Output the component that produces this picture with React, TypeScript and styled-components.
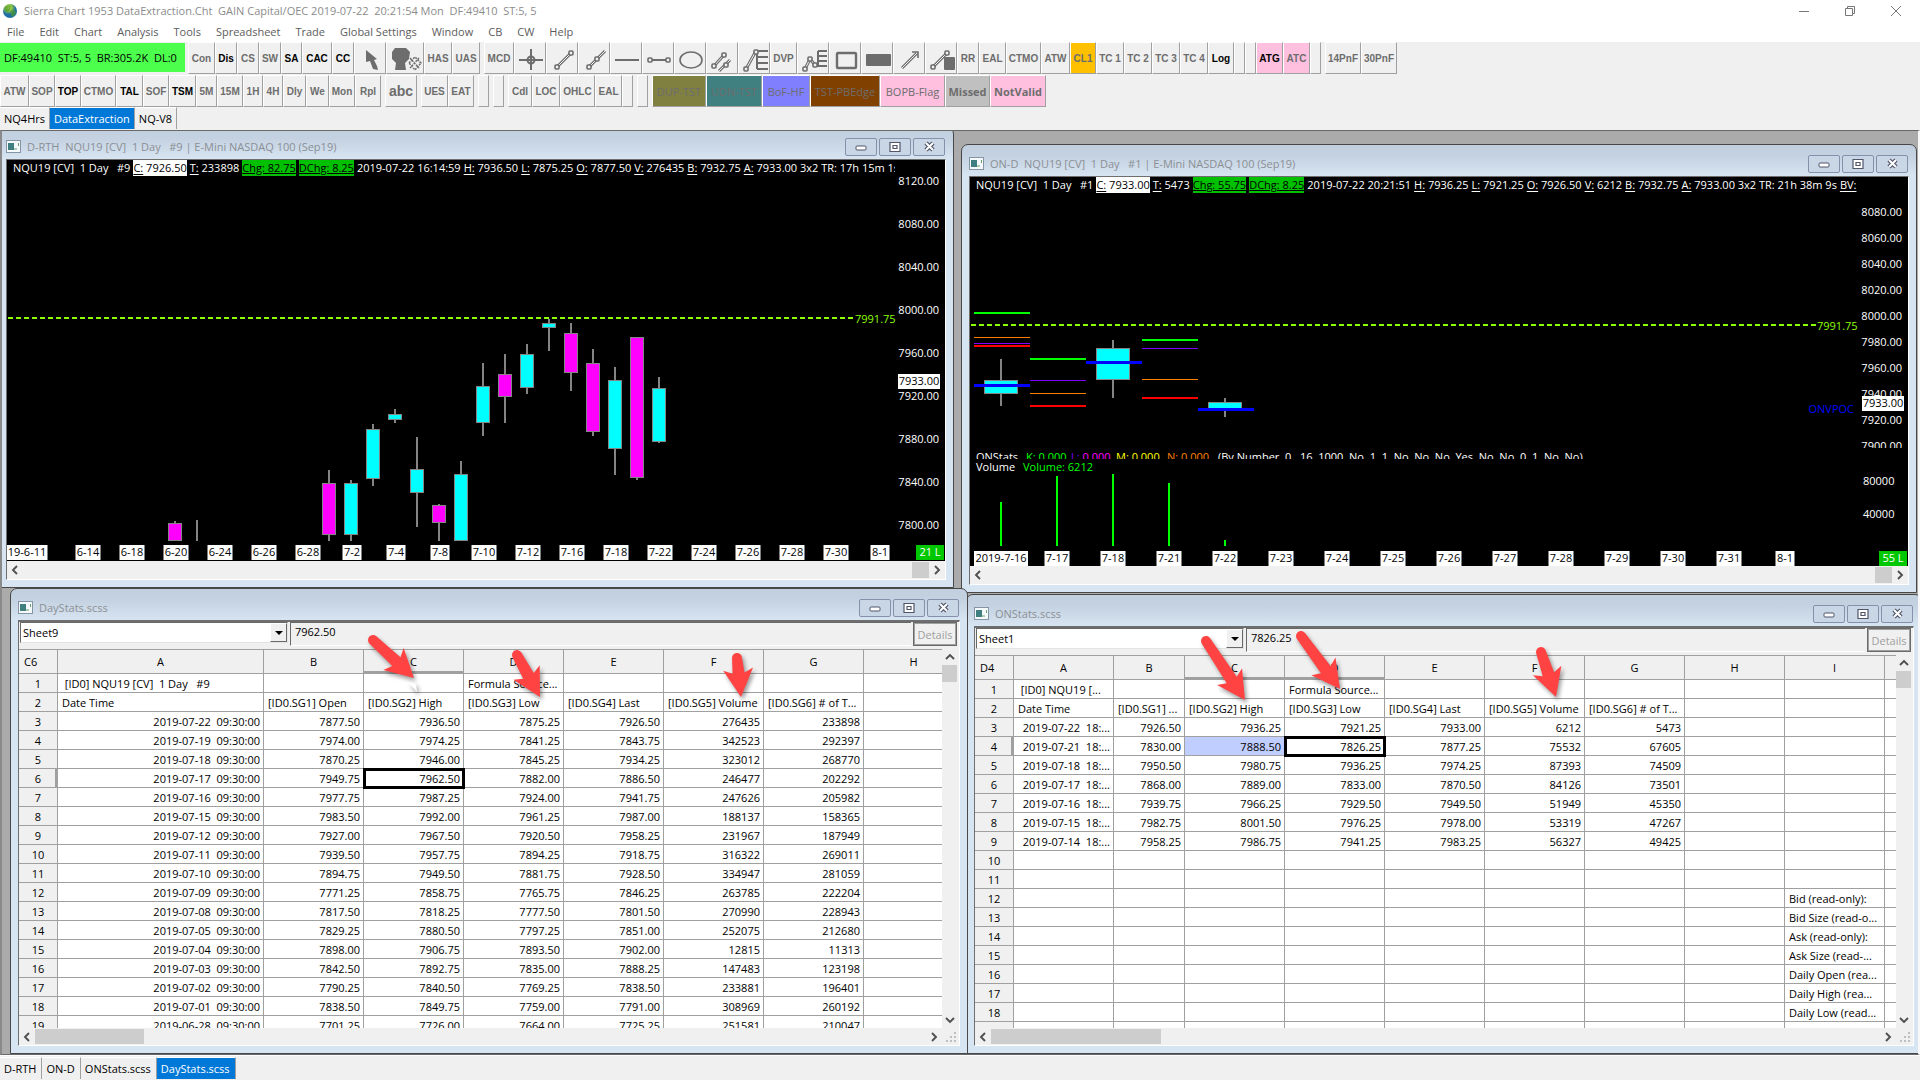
import React from "react";
import styled, { createGlobalStyle, css } from "styled-components";

const GlobalStyle = createGlobalStyle`
  *, *::before, *::after { box-sizing: border-box; }
  body { margin: 0; background: #f0f0f0; }
  body, button, input, select, table {
    font-family: "Open Sans", "Noto Sans", sans-serif;
    font-size: 11px;
  }
  button, input, select { margin: 0; padding: 0; border: 0; border-radius: 0; background: none; color: inherit; }
`;

/* ---------- application frame ---------- */

const Shell = styled.div`
  display: flex;
  flex-direction: column;
  height: 100vh;
  min-height: 720px;
  overflow: hidden;
  color: #000;
`;

const TitleBar = styled.header`
  display: flex;
  align-items: center;
  flex: none;
  height: 24px;
  padding: 0 12px 3px 2px;
  gap: 6px;
  background: #fff;
  color: #8c8c8c;
`;

const AppTitle = styled.h1`
  flex: 1;
  margin: 0;
  font-size: 11px;
  font-weight: 400;
  white-space: pre;
`;

const CaptionButtons = styled.div`
  display: flex;
  gap: 22px;
`;

const CaptionButton = styled.button`
  display: grid;
  place-items: center;
  width: 24px;
  height: 20px;
`;

const MenuBar = styled.nav`
  display: flex;
  flex: none;
  height: 18px;
  padding-bottom: 2px;
  background: #fff;
`;

const MenuItem = styled.button`
  padding: 0 8px 0 7px;
  color: #5c5c5c;
  line-height: 16px;
  white-space: nowrap;
`;

const ToolRow = styled.div<{ $h: number }>`
  display: flex;
  flex: none;
  height: ${(p) => p.$h}px;
  overflow: hidden;
`;

const ToolGroup = styled.div`
  display: flex;
  flex: none;
  margin-right: 4px;
`;

const Status = styled.output`
  flex: none;
  width: 185px;
  height: 29px;
  margin: 1px 3px 0 0;
  padding-left: 4px;
  background: #4dff4d;
  line-height: 29px;
  white-space: pre;
`;

const faces = {
  small: css`font: 700 10px "Liberation Sans", Arial, sans-serif;`,
  large: css`font: 700 14px "Liberation Sans", Arial, sans-serif;`,
  wide: css`font: 400 11px "Open Sans", sans-serif;`,
  wideBold: css`font: 700 11px "Open Sans", sans-serif;`,
};

const Tool = styled.button<{ $w: number; $bg?: string; $strong?: boolean; $face: keyof typeof faces }>`
  display: grid;
  place-items: center;
  flex: none;
  width: ${(p) => p.$w}px;
  height: 32px;
  overflow: hidden;
  border: 1px solid #a0a0a0;
  border-top-color: #fff;
  border-left-color: #fff;
  background: ${(p) => p.$bg ?? "#f0f0f0"};
  color: ${(p) => (p.$strong ? "#000" : "#6d6d6d")};
  white-space: nowrap;
  ${(p) => faces[p.$face]}
`;

const TabStrip = styled.nav<{ $bottom?: boolean }>`
  display: flex;
  flex: none;
  height: ${(p) => (p.$bottom ? 25 : 23)}px;
  padding-top: ${(p) => (p.$bottom ? 1 : 0)}px;
  border-top: ${(p) => (p.$bottom ? "1px solid #fff" : "0")};

  button { padding: 0 ${(p) => (p.$bottom ? 5 : 4)}px 0 4px; }
`;

const Tab = styled.button<{ $active?: boolean }>`
  height: 22px;
  border-right: 1px solid #a0a0a0;
  border-top: 1px solid #fff;
  background: ${(p) => (p.$active ? "#0078d7" : "#f0f0f0")};
  color: ${(p) => (p.$active ? "#fff" : "#000")};
  white-space: nowrap;
`;

const Workspace = styled.main`
  position: relative;
  flex: 1;
  min-height: 0;
  overflow: hidden;
  border: 1px solid #696969;
  border-left: 2px solid #8a8a8a;
  border-right: 2px solid #f8f8f8;
  background: #ababab;
`;

/* ---------- child windows on the workspace ---------- */

type Place = { left: number; top: number; width?: number; right?: number; height?: number; bottom?: number };
const px = (name: string, v?: number) => (v === undefined ? "" : `${name}: ${v}px;`);

const Frame = styled.section<{ $at: Place }>`
  position: absolute;
  display: flex;
  flex-direction: column;
  ${({ $at }) => px("left", $at.left) + px("top", $at.top) + px("width", $at.width) + px("right", $at.right) + px("height", $at.height) + px("bottom", $at.bottom)}
  padding: 0 7px 7px;
  border: 1px solid #484848;
  border-radius: 7px 7px 0 0;
  background: linear-gradient(#c1cfdf 0, #c3d1e0 10px, #d7e4f2 31px);
`;

const FrameBar = styled.header`
  display: flex;
  align-items: center;
  flex: none;
  height: 31px;
  padding: 6px 1px 0 0;
  gap: 6px;
`;

const FrameTitle = styled.h2`
  flex: 1;
  margin: 0;
  color: #8b8f94;
  font-size: 11px;
  font-weight: 400;
  white-space: pre;
`;

const FrameButtons = styled.div`
  display: flex;
  gap: 2px;
`;

const FrameButton = styled.button`
  display: grid;
  place-items: center;
  width: 32px;
  height: 18px;
  border: 1px solid #8391ad;
  border-radius: 2px;
  background: #c8d6e6;
`;

const Client = styled.div<{ $sheet?: boolean }>`
  display: flex;
  flex-direction: column;
  flex: 1;
  min-height: 0;
  overflow: hidden;
  border: 1px solid #fff;
  border-top: ${(p) => (p.$sheet ? 2 : 1)}px solid #6e6e6e;
  border-left-color: #6e6e6e;
  background: #f0f0f0;
`;

const ChartArea = styled.div`
  display: flex;
  flex-direction: column;
  flex: 1;
  min-height: 0;
  background: #000;
  color: #fff;
`;

const Readout = styled.div`
  display: flex;
  flex: none;
  gap: 3px;
  height: 16px;
  margin-right: 50px;
  padding-left: 6px;
  overflow: hidden;
  line-height: 15px;
  white-space: pre;
`;

const tones = {
  plain: css`color: #fff;`,
  last: css`background: #fff; color: #000;`,
  change: css`background: #00c000; color: #000; text-decoration: underline;`,
};

const ReadoutItem = styled.span<{ $tone: keyof typeof tones }>`
  flex: none;
  ${(p) => tones[p.$tone]}
  u { text-underline-offset: 2px; }
`;

const Plot = styled.svg`
  display: block;
  flex: 1;
  width: 100%;
  min-height: 0;
  font-family: "Open Sans", "Noto Sans", sans-serif;
  font-size: 11px;
`;

/* ---------- scroll bars ---------- */

const HBar = styled.div<{ $sheet?: boolean }>`
  display: flex;
  align-items: center;
  flex: none;
  height: ${(p) => (p.$sheet ? 17 : 18)}px;
  background: #f0f0f0;
`;

const VBar = styled.div`
  display: flex;
  flex-direction: column;
  flex: none;
  width: 17px;
  background: #f0f0f0;
`;

const ScrollButton = styled.button`
  display: grid;
  place-items: center;
  flex: none;
  width: 16px;
  height: 16px;
`;

const Thumb = styled.div<{ $w: number; $h: number; $end?: boolean }>`
  flex: none;
  width: ${(p) => p.$w}px;
  height: ${(p) => p.$h}px;
  margin-left: ${(p) => (p.$end ? "auto" : "0")};
  background: #cdcdcd;
`;

const Filler = styled.div`
  flex: 1;
`;

/* ---------- spreadsheet ---------- */

const FormulaBar = styled.div`
  display: flex;
  flex: none;
  gap: 2px;
  height: 27px;
  padding: 0 2px 3px 1px;
`;

const Picker = styled.div`
  position: relative;
  flex: none;
  width: 268px;
  height: 21px;
`;

const SheetSelect = styled.select`
  appearance: none;
  width: 100%;
  height: 100%;
  padding-left: 2px;
  border: 1px solid #e3e3e3;
  border-top-color: #696969;
  border-left-color: #696969;
  background: #fff;
  color: #000;
`;

const PickerArrow = styled.span`
  position: absolute;
  top: 1px;
  right: 1px;
  display: grid;
  place-items: center;
  width: 17px;
  height: 19px;
  border: 1px solid #696969;
  border-top-color: #fff;
  border-left-color: #fff;
  background: #f0f0f0;
  pointer-events: none;
`;

const FormulaInput = styled.input`
  flex: 1;
  min-width: 0;
  padding: 0 4px 5px;
  border-top: 1px solid #696969;
  border-left: 1px solid #696969;
  border-bottom: 1px solid #fff;
`;

const Details = styled.button`
  flex: none;
  width: 44px;
  border: 1px solid #696969;
  outline: 1px solid #a0a0a0;
  outline-offset: -2px;
  color: #a0a0a0;
`;

const GridRow = styled.div`
  display: flex;
  flex: 1;
  min-height: 0;
`;

const GridClip = styled.div`
  flex: 1;
  min-width: 0;
  overflow: hidden;
  border-top: 1px solid #a0a0a0;
  background: #fff;
`;

const Grid = styled.table`
  width: 0;
  table-layout: fixed;
  border-spacing: 0;
  border-collapse: separate;
  line-height: 17px;
  white-space: pre;
`;

const line = css`
  border-right: 1px solid #a0a0a0;
  border-bottom: 1px solid #a0a0a0;
`;

const ColHead = styled.th<{ $on?: boolean }>`
  ${line}
  height: 24px;
  padding: 0;
  background: #f0f0f0;
  font-weight: 400;
  ${(p) => p.$on && "border-bottom-width: 3px; padding-top: 2px;"}
`;

const Corner = styled(ColHead)`
  padding-left: 5px;
  text-align: left;
`;

const RowHead = styled.th<{ $on?: boolean }>`
  ${line}
  height: 19px;
  padding: 1px 0 0;
  background: #f0f0f0;
  font-weight: 400;
  ${(p) => p.$on && "border-right-width: 3px; padding-left: 2px;"}
`;

const Cell = styled.td<{ $left?: boolean; $state?: "cursor" | "range" }>`
  ${line}
  height: 19px;
  padding: 1px 3px 0 4px;
  overflow: hidden;
  text-align: ${(p) => (p.$left ? "left" : "right")};
  ${(p) => p.$state === "cursor" && "outline: 3px solid #000; outline-offset: -2px;"}
  ${(p) => p.$state === "range" && "background: #c0ceff;"}
`;

const Overlay = styled.svg`
  position: absolute;
  inset: 0;
  width: 100%;
  height: 100%;
  pointer-events: none;
  filter: drop-shadow(2px 3px 2px rgba(0, 0, 0, 0.4));
`;

/* ---------- toolbar icons ---------- */

const ink = "#6d6d6d";
const Node = ({ x, y }: { x: number; y: number }) => (
  <rect x={x - 2} y={y - 2} width="4" height="4" rx="1" fill="#f0f0f0" stroke={ink} strokeWidth="1.6" />
);
const Twin = ({ p }: { p: number[] }) => (
  <>
    <line x1={p[0]} y1={p[1]} x2={p[2]} y2={p[3]} stroke={ink} strokeWidth="3" />
    <line x1={p[0]} y1={p[1]} x2={p[2]} y2={p[3]} stroke="#f0f0f0" strokeWidth="1" />
  </>
);

const glyphs: Record<string, React.ReactNode> = {
  Pointer: <path d="M11 7v12l4-1 3 8 5 1-1-4-3-6 3-1z" fill={ink} />,
  Hand: (
    <>
      <path d="M8 5h11l4 4-1 7-4 4 1 7H8l1-7-4-4V9z" fill={ink} />
      <path d="M22 20l6-6 6 6-6 7-6-7zM23 15l9 10M32 15l-9 10" fill="none" stroke={ink} strokeWidth="1.5" strokeDasharray="2 1" />
    </>
  ),
  Crosshair: (
    <>
      <path d="M4 17h24M16 6v21" stroke={ink} strokeWidth="2" />
      <circle cx="16" cy="17" r="3.5" fill="none" stroke={ink} strokeWidth="2" />
    </>
  ),
  Line: (<><Twin p={[10, 24, 24, 10]} /><Node x={10} y={24} /><Node x={24} y={10} /></>),
  Ray: (<><Twin p={[10, 24, 26, 8]} /><Node x={10} y={24} /><Node x={18} y={16} /></>),
  Horizontal: <path d="M4 17h24" stroke={ink} strokeWidth="2" />,
  Segment: (<><path d="M7 17h19" stroke={ink} strokeWidth="2" /><Node x={7} y={17} /><Node x={25} y={17} /></>),
  Ellipse: <ellipse cx="16" cy="17" rx="11" ry="8" fill="none" stroke={ink} strokeWidth="1.6" />,
  Parallel: (
    <><Twin p={[7, 23, 17, 12]} /><Twin p={[12, 28, 23, 17]} /><Node x={7} y={23} /><Node x={17} y={12} /><Node x={19} y={22} /></>
  ),
  Retracement: (
    <><Twin p={[7, 26, 17, 8]} /><path d="M18 8v18M18 8h11M18 14h11M18 20h11M18 26h11" stroke={ink} strokeWidth="2" /><Node x={7} y={26} /><Node x={17} y={9} /></>
  ),
  Projection: (
    <><Twin p={[7, 26, 12, 16]} /><Twin p={[12, 16, 17, 22]} /><path d="M20 8v14M20 8h9M20 13h9M20 18h9M17 23h12" stroke={ink} strokeWidth="2" /><Node x={7} y={26} /><Node x={12} y={16} /><Node x={17} y={22} /></>
  ),
  Rectangle: <rect x="7" y="10" width="19" height="15" rx="1" fill="none" stroke={ink} strokeWidth="2.4" />,
  Block: <rect x="4" y="11" width="25" height="12" rx="1" fill={ink} />,
  Arrow: (<><Twin p={[8, 25, 23, 10]} /><path d="M18 9h6v6" fill="none" stroke={ink} strokeWidth="1.6" /></>),
  Extension: (<><Twin p={[7, 24, 21, 10]} /><rect x="18" y="14" width="11" height="13" rx="1" fill={ink} /><Node x={7} y={24} /><Node x={21} y={10} /></>),
};

/* ---------- toolbar contents ---------- */

type ToolDef = { t?: string; i?: string; w: number; on?: boolean; bg?: string; face?: keyof typeof faces };
const icon = (i: string, w = 32): ToolDef => ({ i, w });
const tool = (t: string, w: number, extra: Partial<ToolDef> = {}): ToolDef => ({ t, w, ...extra });
const on = { on: true };

const rowOne: ToolDef[][] = [
  [
    tool("Con", 27), tool("Dis", 22, on), tool("CS", 22), tool("SW", 22), tool("SA", 21, on), tool("CAC", 30, on), tool("CC", 22, on),
    icon("Pointer"), icon("Hand", 38), tool("HAS", 28), tool("UAS", 28),
  ],
  [
    tool("MCD", 30), icon("Crosshair"), icon("Line"), icon("Ray"), icon("Horizontal"), icon("Segment"), icon("Ellipse"),
    icon("Parallel"), icon("Retracement"), tool("DVP", 27), icon("Projection"), icon("Rectangle"), icon("Block"), icon("Arrow"),
    icon("Extension"), tool("RR", 22), tool("EAL", 27), tool("CTMO", 35), tool("ATW", 29), tool("CL1", 26, { bg: "#ffc000" }),
    tool("TC 1", 28), tool("TC 2", 28), tool("TC 3", 28), tool("TC 4", 28), tool("Log", 26, on), tool("", 11), tool("", 11),
    tool("ATG", 27, { on: true, bg: "#ffc0e0" }), tool("ATC", 27, { bg: "#ffc0e0" }), tool("", 11),
  ],
  [tool("14PnF", 36), tool("30PnF", 36)],
];

const rowTwo: ToolDef[][] = [
  [
    tool("ATW", 29), tool("SOP", 26), tool("TOP", 26, on), tool("CTMO", 35), tool("TAL", 27, on), tool("SOF", 26), tool("TSM", 27, on),
    tool("5M", 21), tool("15M", 26), tool("1H", 20), tool("4H", 20), tool("Dly", 23), tool("We", 23), tool("Mon", 26), tool("Rpl", 26),
  ],
  [tool("abc", 32, { face: "large" })],
  [tool("UES", 27), tool("EAT", 26)],
  [tool("", 11)],
  [tool("", 11)],
  [tool("Cdl", 24), tool("LOC", 28), tool("OHLC", 35), tool("EAL", 27), tool("", 11)],
  [tool("", 11)],
  [
    tool("DUP-TST", 54, { bg: "#808040", face: "wide" }), tool("UDN-TST", 56, { bg: "#408080", face: "wide" }),
    tool("BoF-HF", 48, { bg: "#8080ff", face: "wide" }), tool("TST-PBEdge", 70, { bg: "#804000", face: "wide" }),
    tool("BOPB-Flag", 65, { bg: "#ffc0e0", face: "wide" }), tool("Missed", 45, { bg: "#c0c0c0", face: "wideBold" }),
    tool("NotValid", 56, { bg: "#ffc0e0", face: "wideBold" }),
  ],
];

const Toolbar = ({ groups, height, children }: { groups: ToolDef[][]; height: number; children?: React.ReactNode }) => (
  <ToolRow $h={height}>
    {children}
    {groups.map((g, gi) => (
      <ToolGroup key={gi}>
        {g.map((b, i) => (
          <Tool key={i} $w={b.w} $bg={b.bg} $strong={b.on} $face={b.face ?? "small"} aria-label={b.t || b.i || "Blank"}>
            {b.i ? <svg width={b.w - 2} height="30">{glyphs[b.i]}</svg> : b.t}
          </Tool>
        ))}
      </ToolGroup>
    ))}
  </ToolRow>
);

/* ---------- shared window pieces ---------- */

const DocIcon = () => (
  <svg width="15" height="13">
    <rect x="0.5" y="0.5" width="14" height="12" fill="#f6f9fb" stroke="#8496a6" />
    <rect x="2" y="3" width="6" height="7" fill="#3f7f80" />
    <path d="M8 9h3M12.5 3v3" stroke="#6aa06a" strokeWidth="1" />
  </svg>
);

const Window = ({ title, at, sheet, children }: { title: string; at: Place; sheet?: boolean; children: React.ReactNode }) => (
  <Frame $at={at}>
    <FrameBar>
      <DocIcon />
      <FrameTitle>{title}</FrameTitle>
      <FrameButtons>
        <FrameButton aria-label="Minimize">
          <svg width="12" height="8"><rect x="1" y="3" width="10" height="4" rx="1" fill="#fff" stroke="#51566b" /></svg>
        </FrameButton>
        <FrameButton aria-label="Restore">
          <svg width="12" height="10"><path d="M1 .5h10v9H1z" fill="#fff" stroke="#51566b" strokeWidth="1.2" /><path d="M4 3.5h4v3H4z" fill="#fff" stroke="#51566b" strokeWidth="1.2" /></svg>
        </FrameButton>
        <FrameButton aria-label="Close">
          <svg width="13" height="11"><path d="M3 2l7 7M10 2l-7 7" stroke="#51566b" strokeWidth="4.4" /><path d="M3 2l7 7M10 2l-7 7" stroke="#fff" strokeWidth="2" /></svg>
        </FrameButton>
      </FrameButtons>
    </FrameBar>
    <Client $sheet={sheet}>{children}</Client>
  </Frame>
);

const chevrons = { left: "M7 1L3 5l4 4", right: "M3 1l4 4-4 4", up: "M1 7l4-4 4 4", down: "M1 3l4 4 4-4" };
const Chevron = ({ dir }: { dir: keyof typeof chevrons }) => (
  <ScrollButton aria-label={`Scroll ${dir}`}>
    <svg width="10" height="10"><path d={chevrons[dir]} fill="none" stroke="#505050" strokeWidth="1.9" /></svg>
  </ScrollButton>
);

/* ---------- charts ---------- */

type Piece = [keyof typeof tones, string, string];
const ReadoutLine = ({ pieces }: { pieces: Piece[] }) => (
  <Readout>
    {pieces.map(([tone, label, value], i) => (
      <ReadoutItem key={i} $tone={tone}>{label && <u>{label}</u>}{value}</ReadoutItem>
    ))}
  </Readout>
);

const UP = "#00ffff";
const DOWN = "#ff00ff";
type CandleDef = [number, number, number, number, number, string];

const Candle = ({ c: [x, hi, lo, top, bottom, fill], w }: { c: CandleDef; w: number }) => (
  <g shapeRendering="crispEdges">
    <line x1={x} x2={x} y1={hi} y2={lo} stroke="#848484" strokeWidth="2" />
    {bottom > top && <rect x={x - w / 2} y={top + 0.5} width={w} height={bottom - top - 1} fill={fill} stroke="#848484" />}
  </g>
);

const Label = ({ x, y, w, t, bg = "#fff", fg = "#000" }: { x: number; y: number; w: number; t: string; bg?: string; fg?: string }) => (
  <g>
    <rect x={x - w / 2} y={y - 7} width={w} height="15" fill={bg} />
    <text x={x} y={y + 4} textAnchor="middle" fill={fg}>{t}</text>
  </g>
);

const dayCandles: CandleDef[] = [
  [175, 521, 541, 523, 541, DOWN], [197, 520, 541, 0, 0, UP], [329, 470, 541, 483, 535, DOWN], [351, 480, 541, 483, 535, UP],
  [373, 424, 486, 429, 479, UP], [395, 409, 423, 414, 420, UP], [417, 437, 527, 469, 493, UP], [439, 504, 541, 505, 523, DOWN],
  [461, 461, 541, 474, 541, UP], [483, 363, 436, 386, 423, UP], [505, 354, 423, 374, 397, DOWN], [527, 344, 394, 354, 388, UP],
  [549, 319, 351, 323, 328, UP], [571, 323, 391, 333, 373, DOWN], [593, 349, 436, 363, 432, DOWN], [615, 367, 475, 380, 449, UP],
  [637, 337, 480, 337, 478, DOWN], [659, 377, 443, 388, 442, UP],
];
const dayDates = ["6-14", "6-18", "6-20", "6-24", "6-26", "6-28", "7-2", "7-4", "7-8", "7-10", "7-12", "7-16", "7-18", "7-22", "7-24", "7-26", "7-28", "7-30", "8-1"];

const DayChart = () => (
  <ChartArea>
    <ReadoutLine
      pieces={[
        ["plain", "", "NQU19 [CV]  1 Day   #9"], ["last", "C:", " 7926.50"], ["plain", "T:", " 233898"], ["change", "", "Chg: 82.75"],
        ["change", "", "DChg: 8.25"], ["plain", "", "2019-07-22 16:14:59"], ["plain", "H:", " 7936.50"], ["plain", "L:", " 7875.25"],
        ["plain", "O:", " 7877.50"], ["plain", "V:", " 276435"], ["plain", "B:", " 7932.75"], ["plain", "A:", " 7933.00 3x2 TR: 17h 15m 1s"],
      ]}
    />
    <Plot role="img" aria-label="D-RTH daily candles">
      <g transform="translate(-7 -176)">
        <line x1="8" x2="854" y1="318" y2="318" stroke="#8cff00" strokeWidth="2" strokeDasharray="5 3" />
        <text x="855" y="323" fill="#8cff00">7991.75</text>
        {dayCandles.map((c) => <Candle key={c[0]} c={c} w={13} />)}
        {[8120, 8080, 8040, 8000, 7960, 7920, 7880, 7840, 7800].map((p, i) => (
          <text key={p} x="939" y={185 + i * 43} textAnchor="end" fill="#fff">{p}.00</text>
        ))}
        <Label x={919} y={381} w={42} t="7933.00" />
        <Label x={27} y={552} w={41} t="19-6-11" />
        {dayDates.map((d, i) => <Label key={d} x={88 + i * 44} y={552} w={d.length * 6 + 1} t={d} />)}
        <Label x={930} y={552} w={28} t="21 L" bg="#00c800" fg="#fff" />
      </g>
    </Plot>
  </ChartArea>
);

type Level = [number, number, string, number];
const levels: Level[] = [
  [974, 313, "#00ff00", 2], [974, 337, "#ff8000", 1], [974, 343, "#8000ff", 1], [974, 346, "#ff0000", 2],
  [1030, 359, "#00ff00", 2], [1030, 380, "#8000ff", 1], [1030, 393, "#ff8000", 1], [1030, 406, "#ff0000", 2],
  [1142, 340, "#00ff00", 2], [1142, 348, "#8000ff", 1], [1142, 379, "#ff8000", 1], [1142, 398, "#ff0000", 2],
];
const poc: Level[] = [[974, 385, "#0000ff", 3], [1086, 362, "#0000ff", 3], [1198, 409, "#0000ff", 3]];
const nightCandles: CandleDef[] = [[1001, 359, 406, 380, 394, UP], [1113, 340, 398, 348, 380, UP], [1225, 398, 417, 402, 409, UP]];
const volumes = [[1001, 502], [1057, 476], [1113, 474], [1169, 483], [1225, 540]];
const nightDates = ["7-17", "7-18", "7-21", "7-22", "7-23", "7-24", "7-25", "7-26", "7-27", "7-28", "7-29", "7-30", "7-31", "8-1"];
const LevelLine = ({ l: [x, y, c, w] }: { l: Level }) => <rect x={x} y={y - (w >> 1)} width="56" height={w} fill={c} />;

const NightChart = () => (
  <ChartArea>
    <ReadoutLine
      pieces={[
        ["plain", "", "NQU19 [CV]  1 Day   #1"], ["last", "C:", " 7933.00"], ["plain", "T:", " 5473"], ["change", "", "Chg: 55.75"],
        ["change", "", "DChg: 8.25"], ["plain", "", "2019-07-22 20:21:51"], ["plain", "H:", " 7936.25"], ["plain", "L:", " 7921.25"],
        ["plain", "O:", " 7926.50"], ["plain", "V:", " 6212"], ["plain", "B:", " 7932.75"], ["plain", "A:", " 7933.00 3x2 TR: 21h 38m 9s"], ["plain", "BV:", ""],
      ]}
    />
    <Plot role="img" aria-label="ON-D overnight candles and volume">
      <defs>
        <clipPath id="upper"><rect x="970" y="193" width="940" height="255" /></clipPath>
        <clipPath id="study"><rect x="970" y="448" width="940" height="11" /></clipPath>
      </defs>
      <g transform="translate(-970 -193)">
        <line x1="971" x2="1816" y1="325" y2="325" stroke="#8cff00" strokeWidth="2" strokeDasharray="5 3" />
        <text x="1817" y="330" fill="#8cff00">7991.75</text>
        {levels.map((l, i) => <LevelLine key={i} l={l} />)}
        {nightCandles.map((c) => <Candle key={c[0]} c={c} w={33} />)}
        {poc.map((l, i) => <LevelLine key={i} l={l} />)}
        <g clipPath="url(#upper)">
          {[8080, 8060, 8040, 8020, 8000, 7980, 7960, 7940, 7920, 7900].map((p, i) => (
            <text key={p} x="1902" y={216 + i * 26} textAnchor="end" fill="#fff">{p}.00</text>
          ))}
        </g>
        <Label x={1883} y={403} w={42} t="7933.00" />
        <text x="1854" y="413" textAnchor="end" fill="#0000ff">ONVPOC</text>
        <g clipPath="url(#study)">
          <text x="976" y="461" fill="#fff">ONStats</text>
          <text x="1026" y="461" fill="#00ff00">K: 0.000</text>
          <text x="1071" y="461" fill="#ff00ff"><tspan fill="#8000ff">L:</tspan> 0.000</text>
          <text x="1116" y="461" fill="#ffff00">M: 0.000</text>
          <text x="1167" y="461" fill="#ff8000">N: 0.000</text>
          <text x="1218" y="461" fill="#fff">(By Number, 0, .16, 1000, No, 1, 1, No, No, No, Yes, No, No, 0, 1, No, No)</text>
        </g>
        <text x="976" y="471" fill="#fff">Volume</text>
        <text x="1023" y="471" fill="#00ff00">Volume: 6212</text>
        <text x="1863" y="485" fill="#fff">80000</text>
        <text x="1863" y="518" fill="#fff">40000</text>
        {volumes.map(([x, y]) => <rect key={x} x={x - 1} y={y} width="2" height={546 - y} fill="#00ff00" />)}
        <Label x={1001} y={558} w={54} t="2019-7-16" />
        {nightDates.map((d, i) => <Label key={d} x={1057 + i * 56} y={558} w={d.length * 6 + 1} t={d} />)}
        <Label x={1893} y={558} w={28} t="55 L" bg="#00c800" fg="#fff" />
      </g>
    </Plot>
  </ChartArea>
);

const ChartScroll = () => (
  <HBar>
    <Chevron dir="left" />
    <Thumb $w={17} $h={16} $end />
    <Chevron dir="right" />
  </HBar>
);

/* ---------- sheets ---------- */

type SheetData = {
  name: string; value: string; corner: string; cols: string[]; widths: number[]; onCols: string[]; onRow: number;
  cursor: string; range?: string; rows: string[][]; thumb: number;
};

const dayHeads = ["Date Time", "[ID0.SG1] Open", "[ID0.SG2] High", "[ID0.SG3] Low", "[ID0.SG4] Last", "[ID0.SG5] Volume", "[ID0.SG6] # of T..."];
const dayRows = `07-22 7877.50 7936.50 7875.25 7926.50 276435 233898
07-19 7974.00 7974.25 7841.25 7843.75 342523 292397
07-18 7870.25 7946.00 7845.25 7934.25 323012 268770
07-17 7949.75 7962.50 7882.00 7886.50 246477 202292
07-16 7977.75 7987.25 7924.00 7941.75 247626 205982
07-15 7983.50 7992.00 7961.25 7987.00 188137 158365
07-12 7927.00 7967.50 7920.50 7958.25 231967 187949
07-11 7939.50 7957.75 7894.25 7918.75 316322 269011
07-10 7894.75 7949.50 7881.75 7928.50 334947 281059
07-09 7771.25 7858.75 7765.75 7846.25 263785 222204
07-08 7817.50 7818.25 7777.50 7801.50 270990 228943
07-05 7829.25 7880.50 7797.25 7851.00 252075 212680
07-04 7898.00 7906.75 7893.50 7902.00 12815 11313
07-03 7842.50 7892.75 7835.00 7888.25 147483 123198
07-02 7790.25 7840.50 7769.25 7838.50 233881 196401
07-01 7838.50 7849.75 7759.00 7791.00 308969 260192
06-28 7701.25 7726.00 7664.00 7725.25 251581 210047`
  .split("\n")
  .map((r) => r.split(" "))
  .map(([d, ...v]) => [`2019-${d}  09:30:00`, ...v]);

const nightRows = `07-22 7926.50 7936.25 7921.25 7933.00 6212 5473
07-21 7830.00 7888.50 7826.25 7877.25 75532 67605
07-18 7950.50 7980.75 7936.25 7974.25 87393 74509
07-17 7868.00 7889.00 7833.00 7870.50 84126 73501
07-16 7939.75 7966.25 7929.50 7949.50 51949 45350
07-15 7982.75 8001.50 7976.25 7978.00 53319 47267
07-14 7958.25 7986.75 7941.25 7983.25 56327 49425`
  .split("\n")
  .map((r) => r.split(" "))
  .map(([d, ...v]) => [`2019-${d}  18:...`, ...v]);

const quoteLabels = ["Bid (read-only):", "Bid Size (read-o...", "Ask (read-only):", "Ask Size (read-...", "Daily Open (rea...", "Daily High (rea...", "Daily Low (read...", "Daily Price Cha..."];

const daySheet: SheetData = {
  name: "Sheet9", value: "7962.50", corner: "C6", cols: [..."ABCDEFGH"], widths: [39, 206, 100, 100, 100, 100, 100, 100, 100],
  onCols: ["C"], onRow: 6, cursor: "C6", thumb: 109,
  rows: [[" [ID0] NQU19 [CV]  1 Day   #9", "", "", "Formula Source..."], dayHeads, ...dayRows],
};

const nightSheet: SheetData = {
  name: "Sheet1", value: "7826.25", corner: "D4", cols: [..."ABCDEFGHIJ"], widths: [39, 100, 71, 100, 100, 100, 100, 100, 100, 100, 100],
  onCols: ["C", "D"], onRow: 4, cursor: "D4", range: "C4", thumb: 170,
  rows: [
    [" [ID0] NQU19 [...", "", "", "Formula Source..."],
    ["Date Time", "[ID0.SG1] ...", ...dayHeads.slice(2)],
    ...nightRows, [], [],
    ...quoteLabels.map((q) => ["", "", "", "", "", "", "", "", q]),
  ],
};

const Sheet = ({ data }: { data: SheetData }) => (
  <>
    <FormulaBar>
      <Picker>
        <SheetSelect aria-label="Sheet" defaultValue={data.name}><option>{data.name}</option></SheetSelect>
        <PickerArrow><svg width="8" height="4"><path d="M0 0h8L4 4z" fill="#000" /></svg></PickerArrow>
      </Picker>
      <FormulaInput aria-label="Cell value" readOnly value={data.value} />
      <Details disabled>Details</Details>
    </FormulaBar>
    <GridRow>
      <GridClip>
        <Grid>
          <colgroup>{data.widths.map((w, i) => <col key={i} style={{ width: w }} />)}</colgroup>
          <thead>
            <tr>
              <Corner>{data.corner}</Corner>
              {data.cols.map((c) => <ColHead key={c} $on={data.onCols.includes(c)}>{c}</ColHead>)}
            </tr>
          </thead>
          <tbody>
            {data.rows.map((row, r) => (
              <tr key={r}>
                <RowHead scope="row" $on={r + 1 === data.onRow}>{r + 1}</RowHead>
                {data.cols.map((c, i) => {
                  const id = `${c}${r + 1}`;
                  return (
                    <Cell key={c} $left={r < 2 || i > 6} $state={id === data.cursor ? "cursor" : id === data.range ? "range" : undefined}>
                      {row[i] ?? ""}
                    </Cell>
                  );
                })}
              </tr>
            ))}
          </tbody>
        </Grid>
      </GridClip>
      <VBar>
        <Chevron dir="up" />
        <Thumb $w={15} $h={17} />
        <Filler />
        <Chevron dir="down" />
      </VBar>
    </GridRow>
    <HBar $sheet>
      <Chevron dir="left" />
      <Thumb $w={data.thumb} $h={15} />
      <Filler />
      <Chevron dir="right" />
      <svg width="17" height="15">
        <path d="M4 11h2v2H4zM8 11h2v2H8zM12 11h2v2h-2zM8 7h2v2H8zM12 7h2v2h-2zM12 3h2v2h-2z" fill="#bfbfbf" />
      </svg>
    </HBar>
  </>
);

/* ---------- red marker arrows ---------- */

const Marker = ({ a: [x1, y1, x2, y2] }: { a: number[] }) => {
  const len = Math.hypot(x2 - x1, y2 - y1);
  const angle = (Math.atan2(y2 - y1, x2 - x1) * 180) / Math.PI;
  const neck = len - 27;
  return (
    <g transform={`translate(${x1} ${y1}) rotate(${angle})`} fill="#ff4343">
      <path d={`M0 -5A5 5 0 0 0 0 5L${neck + 3} 6L${neck - 1} 15L${len} 0L${neck - 1} -15L${neck + 3} -6Z`} />
    </g>
  );
};
const markers = [
  [373, 640, 414, 678], [517, 655, 540, 697], [737, 658, 741, 697], [1206, 641, 1245, 700], [1301, 636, 1340, 689], [1541, 652, 1556, 697],
];

const menus = ["File", "Edit", "Chart", "Analysis", "Tools", "Spreadsheet", "Trade", "Global Settings", "Window", "CB", "CW", "Help"];

export default function App() {
  return (
    <Shell>
      <GlobalStyle />
      <TitleBar>
        <svg width="16" height="18">
          <defs>
            <radialGradient id="globe" cx="40%" cy="25%"><stop offset="0" stopColor="#fff9a0" /><stop offset="0.45" stopColor="#8cc63c" /><stop offset="1" stopColor="#1d6fa5" /></radialGradient>
          </defs>
          <circle cx="8" cy="9" r="7" fill="url(#globe)" />
          <path d="M3 5l3-2 3 1-1 4-3 2-2-2zM9 9l4-1 1 3-3 4-2-2z" fill="#4f9a2a" opacity=".7" />
        </svg>
        <AppTitle>{"Sierra Chart 1953 DataExtraction.Cht  GAIN Capital/OEC 2019-07-22  20:21:54 Mon  DF:49410  ST:5, 5"}</AppTitle>
        <CaptionButtons>
          <CaptionButton aria-label="Minimize"><svg width="10" height="10"><path d="M0 5.5h10" stroke="#777" /></svg></CaptionButton>
          <CaptionButton aria-label="Restore"><svg width="10" height="10"><path d="M.5 2.5h7v7h-7zM2.5 2.5v-2h7v7h-2" fill="none" stroke="#777" /></svg></CaptionButton>
          <CaptionButton aria-label="Close"><svg width="10" height="10"><path d="M0 0l10 10M10 0L0 10" stroke="#777" /></svg></CaptionButton>
        </CaptionButtons>
      </TitleBar>
      <MenuBar>{menus.map((m) => <MenuItem key={m}>{m}</MenuItem>)}</MenuBar>
      <Toolbar groups={rowOne} height={33}>
        <Status>{"DF:49410  ST:5, 5  BR:305.2K  DL:0"}</Status>
      </Toolbar>
      <Toolbar groups={rowTwo} height={32} />
      <TabStrip>
        <Tab>NQ4Hrs</Tab>
        <Tab $active>DataExtraction</Tab>
        <Tab>NQ-V8</Tab>
      </TabStrip>
      <Workspace>
        <Window title="D-RTH  NQU19 [CV]  1 Day   #9 | E-Mini NASDAQ 100 (Sep19)" at={{ left: -4, top: -4, width: 956, height: 461 }}>
          <DayChart />
          <ChartScroll />
        </Window>
        <Window title="ON-D  NQU19 [CV]  1 Day   #1 | E-Mini NASDAQ 100 (Sep19)" at={{ left: 959, top: 13, right: 1, height: 449 }}>
          <NightChart />
          <ChartScroll />
        </Window>
        <Window sheet title="ONStats.scss" at={{ left: 964, top: 463, right: -4, bottom: 0 }}>
          <Sheet data={nightSheet} />
        </Window>
        <Window sheet title="DayStats.scss" at={{ left: 8, top: 457, width: 958, bottom: 0 }}>
          <Sheet data={daySheet} />
        </Window>
        <Overlay aria-hidden="true">
          <g transform="translate(-2 -131)">
            {markers.map((m, i) => <Marker key={i} a={m} />)}
            <path d="M408 682l8 2 1 8z" fill="#fff" />
          </g>
        </Overlay>
      </Workspace>
      <TabStrip $bottom>
        <Tab>D-RTH</Tab>
        <Tab>ON-D</Tab>
        <Tab>ONStats.scss</Tab>
        <Tab $active>DayStats.scss</Tab>
      </TabStrip>
    </Shell>
  );
}
